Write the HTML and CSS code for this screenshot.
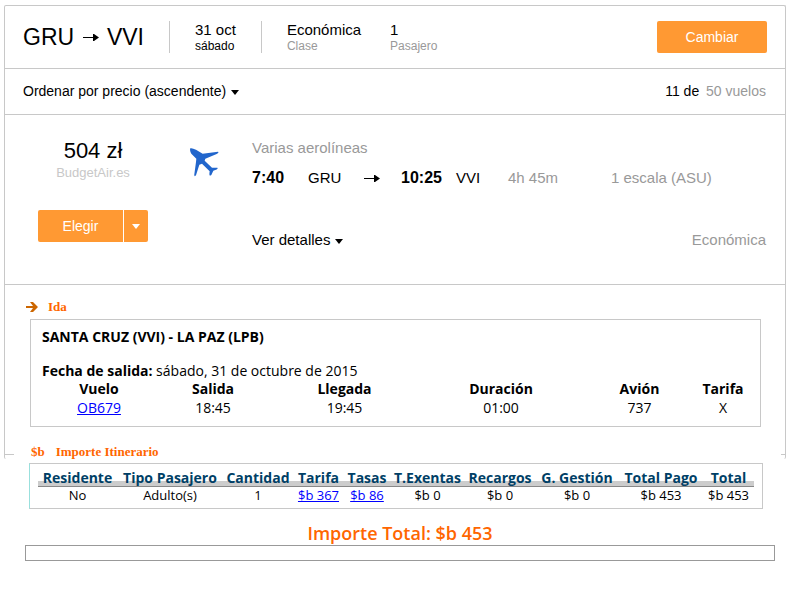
FILE: index.html
```html
<!DOCTYPE html>
<html lang="es">
<head>
    <meta charset="UTF-8">
    <meta name="viewport" content="width=device-width, initial-scale=1.0">
    <title>GRU - VVI</title>
    <link rel="stylesheet" href="styles.css">
</head>
<body>
    <main class="panel">
        <header class="search">
            <h1 class="route">GRU
                <svg class="arrow" width="16" height="7" viewBox="0 0 16 7"><path d="M0 3h10V0h1l5 3.500-5 3.500h-1V4H0z"/></svg>
                VVI</h1>
            <div class="search-item date">31 oct<small>sábado</small></div>
            <div class="search-item">Económica<small>Clase</small></div>
            <div class="search-item">1<small>Pasajero</small></div>
            <button type="button" class="button-orange change">Cambiar</button>
        </header>

        <div class="sort">
            <button type="button" class="button-plain">Ordenar por precio (ascendente)<span class="caret"></span></button>
            <div>11 de <span class="muted total">50 vuelos</span></div>
        </div>

        <section class="result">
            <div class="offer">
                <div class="price">504 zł</div>
                <div class="agency">BudgetAir.es</div>
                <div class="choose">
                    <button type="button" class="button-orange">Elegir</button>
                    <button type="button" class="button-orange more" aria-label="Más ofertas"><span class="caret"></span></button>
                </div>
            </div>
            <svg class="plane" width="29" height="29" viewBox="0 0 87 87"><path d="M1 1C5-1 11 3 18 5L38 17 84 11C87 13 84 16 80 18L46 32 44 38 66 59 82 59C85 61 82 65 70 68L64 81C59 85 57 83 59 70L36 47 28 50 18 82C15 86 12 85 13 79L18 42 19 32 4 17C1 12-1 5 1 1z"/></svg>
            <div class="flight">
                <div class="muted">Varias aerolíneas</div>
                <div class="leg">
                    <b>7:40</b>
                    <span>GRU</span>
                    <svg class="arrow" width="16" height="7" viewBox="0 0 16 7"><path d="M0 3h10V0h1l5 3.500-5 3.500h-1V4H0z"/></svg>
                    <b>10:25</b>
                    <span>VVI</span>
                    <span class="muted">4h 45m</span>
                    <span class="muted">1 escala (ASU)</span>
                </div>
                <div class="flight-foot">
                    <button type="button" class="button-plain">Ver detalles<span class="caret"></span></button>
                    <span class="muted">Económica</span>
                </div>
            </div>
        </section>

        <section class="itinerary">
            <h2 class="title"><svg width="12" height="10" viewBox="0 0 12 10"><path d="M0 4h7L4 0h3l5 5-5 5H4l3-4H0z"/></svg>Ida</h2>
            <div class="box">
                <h3>SANTA CRUZ (VVI) - LA PAZ (LPB)</h3>
                <p><b>Fecha de salida:</b> sábado, 31 de octubre de 2015</p>
                <table class="flights">
                    <colgroup>
                        <col class="w114"><col class="w114"><col class="w149"><col class="w164"><col class="w113"><col class="w54">
                    </colgroup>
                    <thead>
                        <tr>
                            <th>Vuelo</th>
                            <th>Salida</th>
                            <th>Llegada</th>
                            <th>Duración</th>
                            <th>Avión</th>
                            <th>Tarifa</th>
                        </tr>
                    </thead>
                    <tbody>
                        <tr>
                            <td><a href="#">OB679</a></td>
                            <td>18:45</td>
                            <td>19:45</td>
                            <td>01:00</td>
                            <td>737</td>
                            <td>X</td>
                        </tr>
                    </tbody>
                </table>
            </div>
            <h2 class="title amount-title"><span>$b</span>Importe Itinerario</h2>
        </section>
    </main>

    <section class="amounts">
        <div class="fare-box">
            <table class="fares">
                <colgroup>
                    <col class="w79"><col class="w106"><col class="w70"><col class="w51"><col class="w46">
                    <col class="w75"><col class="w70"><col class="w84"><col class="w84"><col class="w51">
                </colgroup>
                <thead>
                    <tr>
                        <th>Residente</th>
                        <th>Tipo Pasajero</th>
                        <th>Cantidad</th>
                        <th>Tarifa</th>
                        <th>Tasas</th>
                        <th>T.Exentas</th>
                        <th>Recargos</th>
                        <th>G. Gestión</th>
                        <th>Total Pago</th>
                        <th>Total</th>
                    </tr>
                </thead>
                <tbody>
                    <tr>
                        <td>No</td>
                        <td>Adulto(s)</td>
                        <td>1</td>
                        <td><a href="#">$b 367</a></td>
                        <td><a href="#">$b 86</a></td>
                        <td>$b 0</td>
                        <td>$b 0</td>
                        <td>$b 0</td>
                        <td>$b 453</td>
                        <td>$b 453</td>
                    </tr>
                </tbody>
            </table>
        </div>
        <div class="grand-total">Importe Total: $b 453</div>
        <div class="bar"></div>
    </section>
</body>
</html>
```
FILE: styles.css
```css
:root {
    --orange: #ff9933;
    --title-color: #ff6600;
    --border-color: #c8c8c8;
    --muted: #999;
}

* {
    box-sizing: border-box;
}
body {
    margin: 5px 10px 0 4px;
    background-color: white;
    color: black;
    font-family: Arial, "Liberation Sans", sans-serif;
    font-size: 15px;
    line-height: 18px;
}
h1, h2, h3, p {
    margin: 0;
}
button {
    padding: 0;
    border: none;
    font: inherit;
    cursor: pointer;
}
a {
    color: #0000ff;
}

.panel {
    position: relative;
    border: 1px solid var(--border-color);
    border-bottom: none;
    border-radius: 2px;
}
/* cut ends of the bottom line */
.panel::before, .panel::after {
    content: "";
    position: absolute;
    bottom: 4px;
    height: 1px;
    background-color: var(--border-color);
}
.panel::before {
    left: 0;
    width: 9px;
}
.panel::after {
    right: 0;
    width: 4px;
}
.muted {
    color: var(--muted);
}
.caret {
    display: inline-block;
    margin-left: 5px;
    border: 4px solid transparent;
    border-top: 5px solid;
    border-bottom: none;
    vertical-align: 1px;
}
.button-orange {
    height: 32px;
    background-color: var(--orange);
    color: white;
    border-radius: 2px;
    font-size: 14px;
}
.button-plain {
    background: none;
    color: black;
}

.search {
    display: flex;
    align-items: center;
    height: 63px;
    padding: 0 18px;
    border-bottom: 1px solid var(--border-color);
}
.route {
    width: 146px;
    font-size: 23px;
    font-weight: normal;
    line-height: 32px;
}
.route .arrow {
    margin: 0 2px;
    vertical-align: 4px;
}
.search-item {
    height: 32px;
    line-height: 18px;
    margin-right: 29px;
}
.search-item small {
    display: block;
    font-size: 12px;
    line-height: 14px;
    color: var(--muted);
}
.date {
    padding: 0 25px;
    margin-right: 25px;
    border: solid var(--border-color);
    border-width: 0 1px;
}
.date small {
    color: black;
}
.change {
    width: 110px;
    margin-left: auto;
}

.sort {
    display: flex;
    justify-content: space-between;
    align-items: center;
    height: 46px;
    padding: 0 19px 2px 18px;
    border-bottom: 1px solid var(--border-color);
    font-size: 14px;
}
.total {
    margin-left: 3px;
}

.result {
    display: flex;
    height: 170px;
    padding: 24px 19px 0 33px;
    border-bottom: 1px solid var(--border-color);
}
.offer {
    width: 110px;
    text-align: center;
}
.price {
    font-size: 22px;
    line-height: 24px;
}
.agency {
    font-size: 13px;
    line-height: 20px;
    color: #c8c8c8;
}
.choose {
    display: flex;
    gap: 1px;
    margin-top: 27px;
}
.choose button:first-child {
    flex: 1;
    border-radius: 2px 0 0 2px;
}
.choose .more {
    width: 24px;
    border-radius: 0 2px 2px 0;
}
.more .caret {
    margin-left: 0;
    vertical-align: 2px;
}
.plane {
    margin: 9px 33px 0 42px;
    fill: #2266cc;
}
.flight {
    flex: 1;
}
.leg {
    display: grid;
    grid-template-columns: 56px 56px 37px 55px 52px 103px auto;
    align-items: center;
    margin-top: 12px;
}
.leg b {
    font-size: 16px;
}
.flight-foot {
    display: flex;
    justify-content: space-between;
    margin-top: 44px;
}

.itinerary {
    padding: 15px 24px 0 21px;
}
.title {
    display: flex;
    align-items: center;
    font-family: "Times New Roman", "Liberation Serif", serif;
    font-size: 13px;
    line-height: 14px;
    color: var(--title-color);
}
.title svg {
    margin-right: 10px;
    fill: #cc6600;
}
.box {
    height: 108px;
    margin: 5px 0 0 4px;
    padding: 8px 11px;
    border: 1px solid var(--border-color);
}
.box, .amounts {
    font-family: "Trebuchet MS", "Open Sans", sans-serif;
    font-size: 14px;
}
.box h3 {
    font-size: 14px;
    line-height: 17px;
}
.box p {
    margin-top: 17px;
    line-height: 17px;
}
table {
    width: 100%;
    table-layout: fixed;
    border-collapse: collapse;
}
th, td {
    padding: 0;
    text-align: center;
    white-space: nowrap;
}
.flights {
    line-height: 19px;
}
.amount-title {
    margin: 18px 0 0 5px;
}
.amount-title span {
    margin-right: 11px;
}

.w46 { width: 46px; }
.w51 { width: 51px; }
.w54 { width: 54px; }
.w70 { width: 70px; }
.w75 { width: 75px; }
.w79 { width: 79px; }
.w84 { width: 84px; }
.w106 { width: 106px; }
.w113 { width: 113px; }
.w114 { width: 114px; }
.w149 { width: 149px; }
.w164 { width: 164px; }

.amounts {
    padding: 4px 11px 0 21px;
}
.fare-box {
    height: 46px;
    margin: 0 12px 0 4px;
    padding: 5px 8px;
    border: 1px solid var(--border-color);
    border-left-color: #99e0dd;
}
.fares {
    line-height: 17px;
}
.fares thead {
    color: #003f66;
    background: linear-gradient(#ccc, #ccc) 0 12px / 100% 5px no-repeat;
}
.fares thead tr {
    border-bottom: 1px solid #888;
}
.fares td {
    font-size: 13px;
}
.grand-total {
    margin-top: 12px;
    font-size: 18px;
    font-weight: 600;
    line-height: 24px;
    text-align: center;
    color: var(--title-color);
}
.bar {
    height: 16px;
    border: 1px solid #999;
}
```
